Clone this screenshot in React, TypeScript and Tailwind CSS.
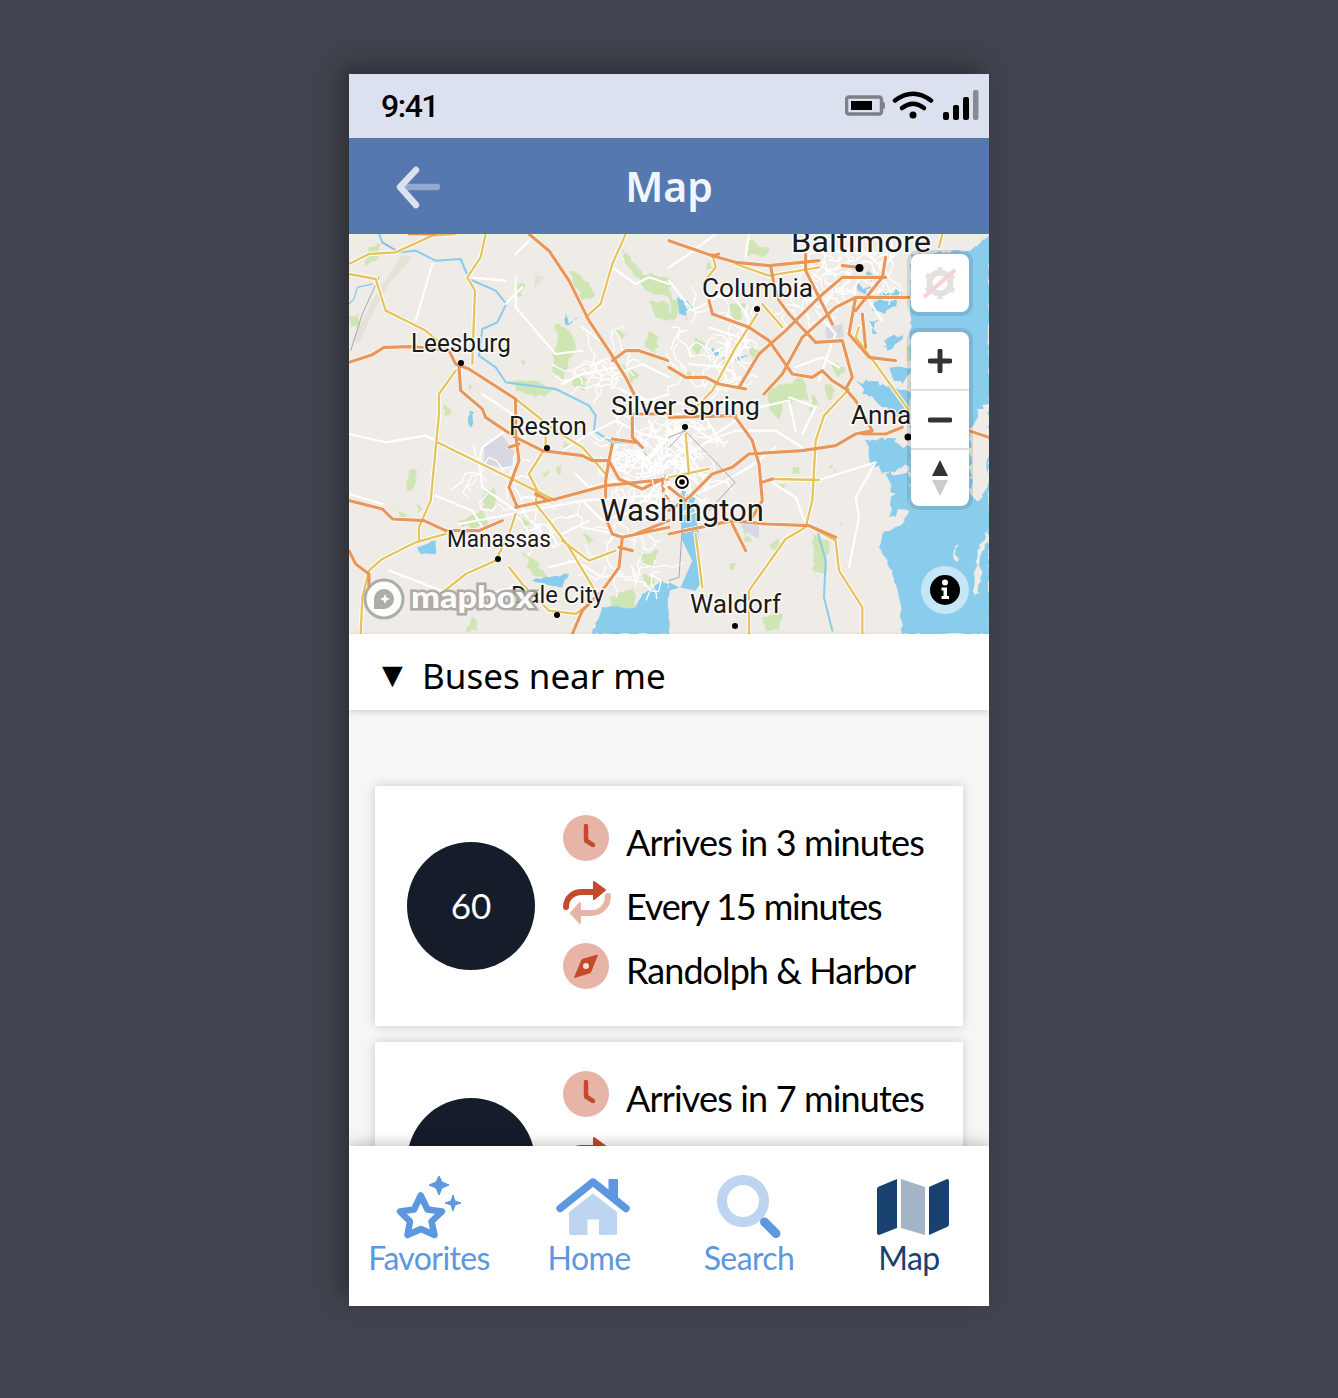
import React from "react";

const UI_FONT = "font-['Lato',sans-serif]";

// tiny seeded random so the map comes out the same on every run
function makeRandom(seed: number) {
  let s = seed;
  return () => {
    s = (s * 16807) % 2147483647;
    return s / 2147483647;
  };
}

// breaks polygon edges into short jagged steps, for coastlines and woods
function roughen(d: string, seed: number, amp: number) {
  const rand = makeRandom(seed);
  return d
    .split("Z")
    .filter((part) => part.trim())
    .map((part) => {
      const nums = part.match(/-?\d+(\.\d+)?/g)!.map(Number);
      const pts: number[][] = [];
      for (let i = 0; i < nums.length; i += 2) pts.push([nums[i], nums[i + 1]]);
      let out = "";
      pts.forEach((p, i) => {
        const q = pts[(i + 1) % pts.length];
        const steps = Math.max(1, Math.round(Math.hypot(q[0] - p[0], q[1] - p[1]) / 12));
        for (let k = 0; k < steps; k++) {
          const t = k / steps;
          const x = p[0] + (q[0] - p[0]) * t + (k ? (rand() - 0.5) * amp : 0);
          const y = p[1] + (q[1] - p[1]) * t + (k ? (rand() - 0.5) * amp : 0);
          out += `${out ? "L" : "M"}${x.toFixed(1)} ${y.toFixed(1)}`;
        }
      });
      return out + "Z";
    })
    .join("");
}

// city streets: short bent lines scattered round a centre
function streetMesh(cx: number, cy: number, rx: number, ry: number, count: number, seed: number) {
  const rand = makeRandom(seed);
  let out = "";
  for (let i = 0; i < count; i++) {
    let x = cx + (rand() - 0.5) * 2 * rx;
    let y = cy + (rand() - 0.5) * 2 * ry;
    out += `M${x.toFixed(0)} ${y.toFixed(0)}`;
    let a = rand() * 6.28;
    for (let k = 0; k < 4; k++) {
      const len = 14 + rand() * 24;
      x += Math.cos(a) * len;
      y += Math.sin(a) * len;
      out += `L${x.toFixed(0)} ${y.toFixed(0)}`;
      a += (rand() < 0.5 ? -1 : 1) * (0.4 + rand());
    }
  }
  return out;
}

// map geometry is written in 3x coordinates, left half and right half apart
const orangeLeft = [
  "M540 0L600 50L660 140L720 260L780 350L830 430L860 490",
  "M0 385L70 362L105 340L190 338L300 350L320 390L360 405L500 495L500 600L510 680L480 760L505 820",
  "M330 400L335 470L400 525L410 550L500 610L580 650L700 665L730 680L780 680L810 735L880 765L940 735L960 735",
  "M780 680L770 740L770 790M790 380L830 350L870 350L960 380",
  "M500 820L620 795L770 755L960 735M480 640L510 630M600 800L560 780",
  "M460 860L390 890L290 890L225 860L130 855L100 825L0 800",
  "M60 1060L60 1020L20 990L0 950M180 0L260 0",
  "M770 850L790 900L820 910L810 1000L760 1070L700 1130L670 1200M820 910L960 880M810 940L850 950",
  "M790 630L780 680M790 615L860 625M850 540L960 540M850 540L850 610L880 640",
  "M940 735L945 780L960 800M860 900L960 860",
];
const orangeRight = [
  "M0 20L130 65L200 85L300 95L450 80M130 65L150 60",
  "M305 95L315 150L330 200L360 240L440 325L520 320L550 430L530 465L560 500L610 590L560 600L500 635L400 650L240 660L190 700L130 720L60 790L0 830",
  "M0 400L50 430L110 430L150 450L230 465",
  "M120 200L130 240L240 280L300 320L370 420L430 430L460 410L490 440L530 465",
  "M210 460L270 360L350 290L450 190L520 130L650 130",
  "M285 480L340 420L400 310L500 220L560 190L720 190",
  "M410 60L410 110L450 190L490 270M560 190L540 300L600 370L680 380M580 240L590 340",
  "M520 95L570 100M650 70L640 130L560 230",
  "M200 550L250 620L270 690L280 800L250 850",
  "M0 900L190 860L290 870L420 875L500 910M190 870L230 950",
  "M280 745L310 735M580 600L650 600L700 580M900 590L960 610",
  "M0 550L200 545M50 800L0 760",
];
const yellowLeft = [
  "M410 0L395 70L355 130L378 170L372 330L370 390",
  "M830 0L790 90L755 210L710 250",
  "M0 120L80 135L110 230L180 265L230 290L300 350",
  "M0 90L60 60L140 55L250 5L320 0",
  "M320 410L270 480L270 540L245 800L210 880L210 920",
  "M265 625L560 770L620 800",
  "M500 495L620 590L700 640L770 720",
  "M590 600L590 640L540 720L565 770L560 810L600 860L660 940L720 1040L750 1090",
  "M500 840L480 900L440 980L350 1020L250 1100",
  "M290 900L200 925L100 975L60 1010L40 1090L35 1200",
  "M640 920L720 980L800 950",
  "M480 1000L520 1050L600 1130L680 1140L720 1110",
];
const yellowRight = [
  "M130 60L140 100L100 150M200 90L300 125L450 100",
  "M280 210L340 280",
  "M265 240L200 340L130 470L60 540",
  "M540 465L465 545L440 620L430 800L410 880L350 915L240 1070L240 1200",
  "M310 735L450 738",
  "M570 280L560 310L620 390L720 530",
  "M420 875L500 920L510 1010L580 1120L580 1200",
  "M80 900L100 1060",
  "M820 0L810 40",
  "M50 600L60 720M0 730L120 705",
];
const whiteLeft = [
  "M0 600L110 625L230 605L390 680L400 760L500 830",
  "M250 90L200 260M500 220L560 290L620 360L700 350",
  "M640 450L700 420L800 400M390 680L400 640L470 590",
  "M260 785L370 830L400 880M0 780L100 810",
  "M330 870L700 800L960 780",
  "M120 1010L200 1040L350 1100L490 1060",
  "M700 280L780 340L850 470L960 550",
  "M500 130L500 220M360 130L470 140M400 480L520 560",
  "M640 650L720 600L800 560L880 600L960 620",
  "M880 640L880 720L960 700M800 740L720 760L680 720",
  "M700 800L760 860L860 830L960 820M860 650L900 710L960 660",
  "M800 420L880 390L960 430M820 470L900 500L960 480",
  "M900 560L940 640L930 720M960 600L900 680",
  "M600 1000L680 980L760 1030L820 1020",
  "M700 880L800 900M640 900L720 860",
  "M790 100L860 150L900 130L960 150M470 210L520 160M560 0L500 60",
];
const meshLeft = [
  streetMesh(440, 740, 60, 60, 10, 11),
  streetMesh(640, 880, 130, 70, 18, 29),
  streetMesh(880, 690, 85, 120, 60, 47),
  streetMesh(780, 400, 80, 60, 18, 83),
  streetMesh(860, 960, 90, 70, 16, 97),
];
const whiteRight = [
  "M450 738L620 685L560 790L570 850L540 1000",
  "M300 740L380 790L410 870",
  "M200 590L320 590L400 640",
  "M0 620L60 660L120 620L200 590M60 660L30 730",
  "M120 280L240 320L170 400L60 390",
  "M0 140L70 230L180 170L240 250",
  "M360 490L440 520L400 600M270 520L360 500L380 590",
  "M90 520L140 600L200 560M0 500L90 520",
  "M240 700L320 640M80 780L170 740L240 700",
  "M440 230L500 300L470 380L450 440M560 30L640 100L700 40",
  "M380 400L460 370L510 400M600 200L640 260",
  "M140 0L60 60L0 100M240 0L230 70",
  "M20 590L120 760M0 680L90 750",
];
const meshRight = [
  streetMesh(60, 680, 65, 120, 40, 113),
  streetMesh(140, 340, 130, 110, 34, 131),
  streetMesh(560, 130, 90, 70, 34, 151),
  streetMesh(440, 220, 60, 60, 12, 173),
];
const greenLeft = [
  "M820 40L880 120L960 130L960 190L890 170L830 90Z",
  "M660 110L690 120L740 180L700 200L670 140Z",
  "M620 270L660 290L680 340L640 440L610 400L620 340Z",
  "M490 440L560 440L620 470L560 490L500 470Z",
  "M500 150L530 150L510 190L495 180Z",
  "M680 420L720 440L700 470L670 450Z",
  "M820 390L880 420L850 450Z",
  "M180 710L205 710L195 760L170 770Z",
  "M405 770L435 760L440 820L400 820Z",
  "M330 860L400 830L420 880L340 880Z",
  "M285 510L315 540L285 545Z",
  "M870 960L930 950L920 1000L880 1000Z",
  "M780 1090L850 1060L870 1150L790 1150Z",
  "M520 950L560 980L600 1040L550 1020Z",
  "M370 1150L385 1190L350 1190Z",
  "M145 820L175 845L150 850ZM200 810L220 825L205 840Z",
  "M900 200L960 210L960 260L920 250Z",
  "M520 850L545 870L520 880Z",
  "M60 40L100 30L80 80L50 100Z",
  "M510 370L530 380L525 395Z",
  "M360 450L375 460L360 470Z",
  "M640 620L665 630L640 650ZM580 720L600 710L590 740ZM620 700L640 690L630 730Z",
  "M700 900L740 920L720 930ZM880 1020L920 1040L890 1060Z",
  "M900 290L930 310L920 360L890 340Z",
  "M800 280L830 300L810 320Z",
  "M0 250L30 240L30 280L5 280Z",
];
const greenRight = [
  "M300 470L400 430L420 500L340 510L330 560L300 530Z",
  "M180 210L230 210L210 260L190 250Z",
  "M240 20L300 40L280 70L230 60Z",
  "M120 80L140 110L110 110Z",
  "M470 450L500 470L480 500Z",
  "M430 480L450 510L420 530Z",
  "M370 700L390 700L390 720L370 720Z",
  "M490 690L500 720L478 700Z",
  "M330 750L355 750L340 770Z",
  "M430 900L480 920L470 1020L430 1010Z",
  "M300 930L330 915L320 950Z",
  "M180 990L205 985L195 1010Z",
  "M280 1150L340 1140L330 1190L290 1190Z",
  "M220 890L250 920L230 925Z",
  "M710 340L730 340L730 380L710 380Z",
  "M0 170L30 210L10 260L0 250Z",
  "M510 865L530 870L515 880Z",
  "M490 390L530 400L510 430Z",
  "M70 300L110 330L80 370Z",
  "M240 340L280 350L250 380Z",
  "M150 360L190 370L170 400ZM40 400L70 420L40 440Z",
];
const water = [
  "M905 50L960 5L960 1200L700 1200L690 1090L670 1010L630 940L640 900L700 870L725 820L725 60Z",
];
const inlets = [
  "M640 160L700 180L650 240L610 230Z",
  "M560 150L610 160L590 180Z",
  "M595 115L630 125L610 145Z",
  "M660 310L710 300L670 345L640 340Z",
  "M600 260L630 260L610 300Z",
  "M670 400L725 410L700 450L670 430Z",
  "M560 440L640 450L725 480L725 560L640 520L590 480Z",
  "M580 620L640 610L725 640L725 700L640 720L600 660Z",
  "M650 720L725 710L725 820L660 850L680 780Z",
  "M30 190L70 215L50 260L30 230Z",
  "M130 340L170 350L150 370Z",
  "M190 360L240 360L210 380Z",
];
const potomac = "M0 1070L35 1060L70 980L40 920L30 800L40 770L85 780L90 940L100 1040L80 1070L30 1060L0 1045Z";
const shore = [
  "M960 510L925 525L905 600L905 780L930 800L955 760L960 660Z",
  "M870 930L852 960L865 985L860 955Z",
  "M960 880L925 950L915 1090L932 1080L940 950L960 920Z",
  "M880 0L960 0L905 48L880 48Z",
];
const waterLeft = [
  "M730 1200L760 1120L860 1120L880 1080L940 1040L960 1050L960 1200Z",
  "M650 235L660 270L690 250L655 275L648 270Z",
  "M362 530L375 535L368 580L360 575Z",
  "M205 940L260 920L260 960L215 960Z",
  "M540 1040L660 1020L640 1060L550 1040Z",
];

function RoadLayer({ mesh, white, yellow, orange }: { mesh: string[]; white: string[]; yellow: string[]; orange: string[] }) {
  const major = [...yellow, ...orange].join("");
  return (
    <>
      <path d={mesh.join("")} stroke="#ffffff" strokeWidth="4" />
      <path d={white.join("")} stroke="#ffffff" strokeWidth="6.500" />
      <path d={major} stroke="#ffffff" strokeWidth="13" />
      <path d={yellow.join("")} stroke="#e6c35c" strokeWidth="7" />
      <path d={orange.join("")} stroke="#e8965a" strokeWidth="9.500" />
    </>
  );
}

function MapDrawing() {
  return (
    <svg width="640" height="400" viewBox="0 0 640 400" className="block">
      <rect width="640" height="400" fill="#efebe6" />
      <g transform="scale(0.3333)" fill="none" strokeLinejoin="round" strokeLinecap="round">
        <path d={roughen(greenLeft.join(""), 7, 14)} fill="#cfe5b4" />
        <path d="M160 60L190 70L120 150L60 260L30 330L10 320L70 200Z" fill="#e6e2d6" />
        <path d="M560 120L585 130L555 165Z" fill="#e6e2d6" />
        <path d={roughen(waterLeft.join(""), 17, 8)} fill="#8accec" />
        <path d="M405 640L455 600L495 650L495 705L405 690Z" fill="#d6d8e2" />
        <path d="M90 0L100 25L150 55L200 50L260 80L335 75L360 135L440 170L472 210L445 265L400 285L390 365L440 400L470 445L620 465L720 515L740 545L735 590L790 625L860 625" stroke="#8accec" strokeWidth="6" />
        <path d="M90 130L40 240L5 350M100 25L150 55M860 625L960 740" stroke="#a5a8b6" strokeWidth="3" />
        <path d="M0 210L15 195L25 160L70 150" stroke="#8accec" strokeWidth="4" />
        <RoadLayer mesh={meshLeft} white={whiteLeft} yellow={yellowLeft} orange={orangeLeft} />
      </g>
      <g transform="translate(320 0) scale(0.3333)" fill="none" strokeLinejoin="round" strokeLinecap="round">
        <path d={roughen(greenRight.join(""), 23, 14)} fill="#cfe5b4" />
        <path d={roughen(water.join(""), 31, 8)} fill="#8accec" />
        <path d={roughen(inlets.join(""), 37, 22)} fill="#8accec" />
        <path d={potomac} fill="#8accec" />
        <path d={roughen(shore.join(""), 41, 16)} fill="#efebe6" />
        <path d="M470 280L520 270L525 310L470 315Z" fill="#d6d8e2" />
        <path d="M215 870L270 860L270 915L225 890Z" fill="#d6d8e2" />
        <path d="M445 890L470 980L465 1090L490 1190" stroke="#8accec" strokeWidth="6" />
        <RoadLayer mesh={meshRight} white={whiteRight} yellow={yellowRight} orange={orangeRight} />
        <path d="M0 610L48 590L198 745L120 830M48 590L0 640M40 880L30 1030L0 1040" stroke="#a5a8b6" strokeWidth="3" />
      </g>
      <g
        className="font-['Roboto',sans-serif]"
        fill="#1a1a1a"
        stroke="#ffffff"
        strokeWidth="3"
        strokeOpacity="0.75"
        style={{ paintOrder: "stroke" }}
      >
        <text x="442" y="18" fontSize="29" textLength="140" lengthAdjust="spacingAndGlyphs">Baltimore</text>
        <text x="353" y="63" fontSize="25" textLength="111" lengthAdjust="spacingAndGlyphs">Columbia</text>
        <text x="62" y="118" fontSize="25" textLength="100" lengthAdjust="spacingAndGlyphs">Leesburg</text>
        <text x="160" y="201" fontSize="25" textLength="78" lengthAdjust="spacingAndGlyphs">Reston</text>
        <text x="262" y="181" fontSize="25" textLength="149" lengthAdjust="spacingAndGlyphs">Silver Spring</text>
        <text x="502" y="190" fontSize="25" textLength="116" lengthAdjust="spacingAndGlyphs">Annapolis</text>
        <text x="251" y="287" fontSize="32" textLength="164" lengthAdjust="spacingAndGlyphs">Washington</text>
        <text x="98" y="313" fontSize="24" textLength="104" lengthAdjust="spacingAndGlyphs">Manassas</text>
        <text x="162" y="369" fontSize="24" textLength="93" lengthAdjust="spacingAndGlyphs">Dale City</text>
        <text x="341" y="379" fontSize="25" textLength="91" lengthAdjust="spacingAndGlyphs">Waldorf</text>
      </g>
      <g fill="#000">
        <circle cx="510.500" cy="34" r="4" />
        <circle cx="408" cy="75" r="3" />
        <circle cx="112" cy="129" r="3" />
        <circle cx="198" cy="214" r="3" />
        <circle cx="336" cy="193" r="3" />
        <circle cx="559" cy="203" r="3.500" />
        <circle cx="149" cy="325" r="3" />
        <circle cx="208" cy="381" r="3" />
        <circle cx="386" cy="392" r="3" />
      </g>
      <circle cx="333" cy="248" r="8" fill="#fff" />
      <circle cx="333" cy="248" r="6" fill="none" stroke="#000" strokeWidth="1.800" />
      <circle cx="333" cy="248" r="2.800" fill="#000" />
      <g opacity="0.9">
        <circle cx="35" cy="365" r="19" fill="#fff" stroke="#a8a6a0" strokeWidth="3" />
        <path d="M35 355a10 10 0 0 1 10 10a10 10 0 0 1-10 10h-10v-10a10 10 0 0 1 10-10z" fill="#a8a6a0" />
        <path d="M36 360l1.500 3.500l3.500 1.500l-3.500 1.500l-1.500 3.500l-1.500-3.500l-3.500-1.500l3.500-1.500z" fill="#fff" />
        <text
          x="62"
          y="374"
          fontSize="31"
          fontWeight="900"
          fill="#fff"
          stroke="#a8a6a0"
          strokeWidth="5"
          textLength="123"
          lengthAdjust="spacingAndGlyphs"
          className="font-['Lato',sans-serif]"
          style={{ paintOrder: "stroke" }}
        >
          mapbox
        </text>
      </g>
    </svg>
  );
}

function StatusIcons() {
  return (
    <svg width="134" height="32" viewBox="0 0 134 32" className="block">
      <rect x="1.500" y="7" width="35" height="17" rx="2.500" fill="none" stroke="#7d8088" strokeWidth="3.500" />
      <rect x="6" y="11" width="21" height="9" fill="#000" />
      <rect x="38" y="12.500" width="2" height="6" fill="#7d8088" />
      <path d="M50 10.500Q68-3 86 10.500" fill="none" stroke="#000" strokeWidth="4.500" strokeLinecap="round" />
      <path d="M57 18Q68 9.500 79 18" fill="none" stroke="#000" strokeWidth="4.500" strokeLinecap="round" />
      <circle cx="68" cy="25" r="3.500" fill="#000" />
      <rect x="98" y="22" width="6" height="8" rx="2" fill="#000" />
      <rect x="108" y="15" width="6" height="15" rx="2" fill="#000" />
      <rect x="118" y="7" width="6" height="23" rx="2" fill="#000" />
      <rect x="128" y="0" width="5.500" height="30" rx="2" fill="#888b92" />
    </svg>
  );
}

function BackArrow() {
  return (
    <svg width="46" height="44" viewBox="0 0 46 44" className="block">
      <path d="M9 22H42" stroke="#93a9cf" strokeWidth="6.500" strokeLinecap="round" />
      <path d="M21 5L5 22L21 40" fill="none" stroke="#dbe1ef" strokeWidth="6.500" strokeLinecap="round" strokeLinejoin="round" />
    </svg>
  );
}

function ClockIcon() {
  return (
    <svg width="46" height="46" viewBox="0 0 46 46" className="block">
      <circle cx="23" cy="23" r="23" fill="#e7b5a8" />
      <path d="M23 11V25.500L30 30" fill="none" stroke="#c34a2b" strokeWidth="4.500" strokeLinecap="round" strokeLinejoin="round" />
    </svg>
  );
}

function RepeatIcon() {
  return (
    <svg width="50" height="46" viewBox="1 0 50 46" className="block">
      <path d="M46 17C46 27 38 34 30 34H18" fill="none" stroke="#e7b5a8" strokeWidth="6" strokeLinecap="round" />
      <path d="M18 24L9 34L18 44Z" fill="#e7b5a8" stroke="#e7b5a8" strokeWidth="2" strokeLinejoin="round" />
      <path d="M4 28C4 18 12 13 20 13H32" fill="none" stroke="#c34a2b" strokeWidth="6" strokeLinecap="round" />
      <path d="M32 3L43 11L32 20Z" fill="#c34a2b" stroke="#c34a2b" strokeWidth="2" strokeLinejoin="round" />
    </svg>
  );
}

function CompassIcon() {
  return (
    <svg width="46" height="46" viewBox="0 0 46 46" className="block">
      <circle cx="23" cy="23" r="23" fill="#e7b5a8" />
      <path d="M34.500 12L19 16.500L11.500 34.500L27.500 29.500Z" fill="#c34a2b" stroke="#c34a2b" strokeWidth="1" strokeLinejoin="round" />
      <circle cx="23" cy="23" r="3" fill="#f4e0da" />
    </svg>
  );
}

function FavoritesIcon() {
  return (
    <svg width="70" height="66" viewBox="-1 0 70 66" className="block">
      <path
        d="M25.700 21.500L32.500 35.500L47 37.500L36.500 47.500L39.500 61L26 55L12.500 61L15 47.500L5 37.500L19 35.500Z"
        fill="none"
        stroke="#5c97e0"
        strokeWidth="6.500"
        strokeLinejoin="round"
      />
      <path d="M44 2L47 8L54 11L47 14L44 21L41 14L34 11L41 8Z" fill="#5c97e0" stroke="#5c97e0" strokeLinejoin="round" />
      <path d="M58 21L60 27L66 29L60 31L58 37L56 31L50 29L56 27Z" fill="#5c97e0" stroke="#5c97e0" strokeLinejoin="round" />
    </svg>
  );
}

function HomeIcon() {
  return (
    <svg width="76" height="66" viewBox="0 -2 76 66" className="ml-2 block">
      <path d="M38 17.500L62 36V57a2 2 0 0 1-2 2H44V43.500H32.500V59H16a2 2 0 0 1-2-2V36Z" fill="#bdd5f1" />
      <rect x="53.500" y="3" width="9.500" height="20" rx="1" fill="#5c97e0" />
      <path d="M5 32.500L38 6L71 32.500" fill="none" stroke="#5c97e0" strokeWidth="7.500" strokeLinecap="round" strokeLinejoin="round" />
    </svg>
  );
}

function SearchIcon() {
  return (
    <svg width="70" height="66" viewBox="-1 0 70 66" className="block">
      <circle cx="28" cy="27" r="21" fill="none" stroke="#bdd5f1" strokeWidth="10" />
      <path d="M49.500 48L61 59.500" stroke="#5c97e0" strokeWidth="9" strokeLinecap="round" />
    </svg>
  );
}

function MapIcon() {
  return (
    <svg width="72" height="66" viewBox="0 -4 72 66" className="ml-2 block">
      <path d="M0 11a3 3 0 0 1 2-2.500L20 1V50L2 57a2 2 0 0 1-2-2Z" fill="#18416f" />
      <path d="M24 1L48 9V57L24 50Z" fill="#a3b4c6" />
      <path d="M52 9L70 1a2 2 0 0 1 2 2V46a3 3 0 0 1-2 3L52 57Z" fill="#18416f" />
    </svg>
  );
}

function InfoRow({ icon, text, tracking }: { icon: React.ReactNode; text: string; tracking: string }) {
  return (
    <div className="flex h-16 items-center">
      <div className="mb-2 w-[63px] shrink-0">{icon}</div>
      <span className={`whitespace-nowrap text-[36px] text-black ${tracking}`}>{text}</span>
    </div>
  );
}

function BusCard({ route, minutes, stop }: { route: string; minutes: number; stop: string }) {
  return (
    <div className="flex h-[240px] shrink-0 items-center bg-white pl-8 shadow-[0_0_10px_rgba(0,0,0,0.18)]">
      <div className="flex h-32 w-32 shrink-0 items-center justify-center rounded-full bg-[#161d2a] pb-[2px] text-[35px] text-white">
        {route}
      </div>
      <div className="ml-7 flex flex-col">
        <InfoRow icon={<ClockIcon />} text={`Arrives in ${minutes} minutes`} tracking="tracking-[-0.85px]" />
        <InfoRow icon={<RepeatIcon />} text="Every 15 minutes" tracking="tracking-[-1.15px]" />
        <InfoRow icon={<CompassIcon />} text={stop} tracking="tracking-[-0.95px]" />
      </div>
    </div>
  );
}

function NavItem({ icon, label, active }: { icon: React.ReactNode; label: string; active?: boolean }) {
  return (
    <div className="flex w-40 flex-col items-center pt-7">
      {icon}
      <span className={`text-[32px] leading-[36px] tracking-[-0.6px] ${active ? "text-[#18416f]" : "text-[#5c97e0]"}`}>
        {label}
      </span>
    </div>
  );
}

export default function App() {
  return (
    <div className={`flex min-h-[1398px] justify-center bg-[#41444e] pt-[74px] ${UI_FONT}`}>
      <div className="flex h-[1232px] w-[640px] flex-col overflow-hidden bg-[#f6f6f6] shadow-[-8px_-8px_22px_rgba(0,0,0,0.32)]">
        <div className="flex h-16 shrink-0 items-center justify-between bg-[#dbe1ef] pl-8 pr-[10px]">
          <span className="font-['Roboto',sans-serif] text-[32px] font-medium tracking-[-1.5px] text-black">9:41</span>
          <StatusIcons />
        </div>

        <div className="relative flex h-24 shrink-0 items-center justify-center bg-[#5578ae]">
          <div className="absolute left-[46px] top-[27px]">
            <BackArrow />
          </div>
          <h1 className="font-['Noto_Sans',sans-serif] text-[41px] font-semibold leading-none text-[#f0f6fd]">Map</h1>
        </div>

        <div className="relative h-[400px] shrink-0 overflow-hidden">
          <MapDrawing />
          <div className="absolute left-[562px] top-5 flex h-[58px] w-[58px] items-center justify-center rounded-lg bg-white shadow-[0_0_0_4px_rgba(0,0,0,0.1)]">
            <svg width="36" height="36" viewBox="0 0 36 36">
              <circle cx="18" cy="18" r="10.500" fill="none" stroke="#e2e2e2" strokeWidth="6" />
              <path d="M18 2V7M18 29V34M4 10L8.500 12.500M27.500 23.500L32 26M4 26L8.500 23.500M27.500 12.500L32 10" stroke="#e2e2e2" strokeWidth="5" />
              <path d="M2 32L33 5" stroke="#fbd0d0" strokeWidth="4" />
            </svg>
          </div>
          <div className="absolute left-[562px] top-[98px] flex w-[58px] flex-col rounded-lg bg-white shadow-[0_0_0_4px_rgba(0,0,0,0.1)]">
            <div className="flex h-[59px] items-center justify-center border-b-2 border-[#dddddd]">
              <svg width="24" height="24" viewBox="0 0 24 24">
                <path d="M12 2V22M2 12H22" stroke="#333" strokeWidth="5" strokeLinecap="round" />
              </svg>
            </div>
            <div className="flex h-[59px] items-center justify-center border-b-2 border-[#dddddd]">
              <svg width="24" height="24" viewBox="0 0 24 24">
                <path d="M2 12H22" stroke="#333" strokeWidth="5" strokeLinecap="round" />
              </svg>
            </div>
            <div className="flex h-[56px] items-center justify-center">
              <svg width="16" height="36" viewBox="0 0 16 36">
                <path d="M8 0L16 16H0Z" fill="#333" />
                <path d="M8 36L16 20H0Z" fill="#ccc" />
              </svg>
            </div>
          </div>
          <div className="absolute left-[572px] top-[332px] flex h-12 w-12 items-center justify-center rounded-full bg-white/50">
            <svg width="30" height="30" viewBox="0 0 30 30">
              <circle cx="15" cy="15" r="15" fill="#000" />
              <circle cx="15" cy="7.500" r="3" fill="#fff" />
              <path d="M11.500 12.500H17V21H19V24H11.500V21H13.500V15.500H11.500Z" fill="#fff" />
            </svg>
          </div>
        </div>

        <div className="relative z-10 flex h-[76px] shrink-0 items-center bg-white pl-[33px] shadow-[0_2px_6px_rgba(0,0,0,0.15)]">
          <span className="mt-1 w-[40px] font-['DejaVu_Sans',sans-serif] text-[27px] leading-none text-black">▼</span>
          <span className="mt-[6px] font-['Noto_Sans',sans-serif] text-[35px] leading-none text-black">Buses near me</span>
        </div>

        <div className="flex min-h-0 flex-1 flex-col gap-4 overflow-hidden px-[26px] pt-[76px]">
          <BusCard route="60" minutes={3} stop="Randolph & Harbor" />
          <BusCard route="12" minutes={7} stop="Randolph & Harbor" />
        </div>

        <div className="relative z-10 flex h-40 shrink-0 bg-white shadow-[0_-2px_14px_rgba(0,0,0,0.24)]">
          <NavItem icon={<FavoritesIcon />} label="Favorites" />
          <NavItem icon={<HomeIcon />} label="Home" />
          <NavItem icon={<SearchIcon />} label="Search" />
          <NavItem icon={<MapIcon />} label="Map" active />
        </div>
      </div>
    </div>
  );
}
